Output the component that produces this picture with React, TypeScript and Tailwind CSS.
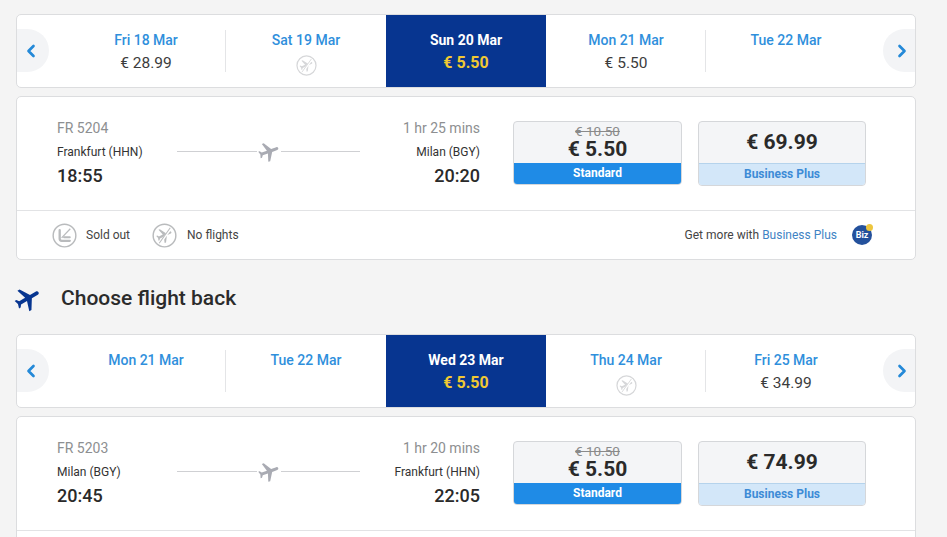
import { ChevronLeft, ChevronRight } from 'lucide-react';

const planePath =
  'M21 16v-2l-8-5V3.5c0-.83-.67-1.5-1.5-1.5S10 2.67 10 3.5V9l-8 5v2l8-2.5V19l-2 1.5V22l3.5-1 3.5 1v-1.5L13 19v-5.5l8 2.5z';

function PlaneIcon({ className, rotate }: { className: string; rotate: number }) {
  return (
    <svg viewBox="0 0 24 24" className={className} fill="currentColor">
      <path d={planePath} transform={`rotate(${rotate} 12 12)`} />
    </svg>
  );
}

function NoFlightIcon({ className, color }: { className: string; color: string }) {
  return (
    <svg viewBox="0 0 26 26" className={className} fill="none">
      <circle cx="13" cy="13" r="11.8" stroke={color} strokeWidth="1.5" />
      <g transform="translate(3.4 3.4) scale(0.8)">
        <path d={planePath} fill={color} transform="rotate(65 12 12)" />
      </g>
      <path d="M20 5 8.5 21" stroke="#ffffff" strokeWidth="2.4" />
      <path d="M19 5 7.5 21" stroke={color} strokeWidth="1.1" />
    </svg>
  );
}

function SoldOutIcon({ className }: { className: string }) {
  return (
    <svg viewBox="0 0 26 26" className={className} fill="none">
      <circle cx="13" cy="13" r="11.8" stroke="#b9bbbd" strokeWidth="1.5" />
      <path d="M8 7.5v9c0 1.2.8 2 2 2h8.5" stroke="#b9bbbd" strokeWidth="2.4" strokeLinecap="round" />
      <path d="M12.5 14.8h6" stroke="#b9bbbd" strokeWidth="2" strokeLinecap="round" />
      <path d="M19 6 10 15.5" stroke="#b9bbbd" strokeWidth="1.3" />
    </svg>
  );
}

type Day = { label: string; price?: string; noFlight?: boolean; active?: boolean };

function DayCell({ day, divider }: { day: Day; divider: boolean }) {
  if (day.active) {
    return (
      <div className="w-[160px] bg-[#073590] flex flex-col items-center pt-[15px] shrink-0">
        <div className="text-[14px] leading-[20px] font-bold text-white">{day.label}</div>
        <div className="text-[16px] leading-[20px] mt-[3px] font-bold text-[#f1c933]">{day.price}</div>
      </div>
    );
  }
  return (
    <div className="w-[160px] relative flex flex-col items-center pt-[15px] shrink-0">
      <div className="text-[14px] leading-[20px] font-medium text-[#2f8fdc]">{day.label}</div>
      {day.price && <div className="text-[15.5px] leading-[20px] mt-[3px] text-[#3c3c3c]">{day.price}</div>}
      {day.noFlight && <NoFlightIcon className="w-[21px] h-[21px] mt-[5px]" color="#d6d7d9" />}
      {divider && <div className="absolute right-0 top-[15px] h-[42px] w-px bg-[#e4e5e7]" />}
    </div>
  );
}

function DateStrip({ days }: { days: Day[] }) {
  return (
    <div className="h-[74px] bg-white border border-[#dcdddf] rounded-[5px] flex overflow-hidden">
      <div className="w-[32px] h-[43px] mt-[14px] rounded-r-full bg-[#f3f4f6] flex items-center justify-start pl-[4px] text-[#2489d8] shrink-0">
        <ChevronLeft size={20} strokeWidth={3.2} />
      </div>
      <div className="flex ml-[17px]">
        {days.map((d, i) => (
          <DayCell key={d.label} day={d} divider={i === 0 || i === 3} />
        ))}
      </div>
      <div className="w-[32px] h-[43px] mt-[14px] ml-auto rounded-l-full bg-[#f3f4f6] flex items-center justify-end pr-[3px] text-[#2489d8] shrink-0">
        <ChevronRight size={20} strokeWidth={3.2} />
      </div>
    </div>
  );
}

type Flight = {
  number: string;
  duration: string;
  from: string;
  to: string;
  depart: string;
  arrive: string;
  business: string;
};

function FlightRow({ flight }: { flight: Flight }) {
  return (
    <div className="flex h-[113px] pl-[40px] pt-[24px]">
      <div className="w-[120px] shrink-0 -mt-[1px]">
        <div className="text-[14px] leading-[16px] text-[#8d8f91]">{flight.number}</div>
        <div className="text-[12px] leading-[16px] mt-[8px] text-[#333333]">{flight.from}</div>
        <div className="text-[18px] leading-[22px] mt-[5px] font-medium text-[#2a2a2a]">{flight.depart}</div>
      </div>
      <div className="w-[183px] h-[16px] mt-[22px] shrink-0 relative flex items-center">
        <div className="w-full h-px bg-[#cfd0d3]" />
        <div className="absolute left-[80px] -top-[3px] bg-white">
          <PlaneIcon className="w-[24px] h-[24px] text-[#a9abb3]" rotate={70} />
        </div>
      </div>
      <div className="w-[120px] shrink-0 text-right -mt-[1px]">
        <div className="text-[14px] leading-[16px] text-[#8d8f91]">{flight.duration}</div>
        <div className="text-[12px] leading-[16px] mt-[8px] text-[#333333]">{flight.to}</div>
        <div className="text-[18px] leading-[22px] mt-[5px] font-medium text-[#2a2a2a]">{flight.arrive}</div>
      </div>
      <div className="w-[169px] h-[64px] ml-[33px] shrink-0 rounded-[4px] border border-[#d5d7da] bg-[#f4f5f7] overflow-hidden flex flex-col items-center">
        <div className="text-[13.5px] leading-[14px] mt-[2px] text-[#8a8a8a] line-through">€ 10.50</div>
        <div className="text-[21px] leading-[22px] font-bold text-[#2a2a2a]">€ 5.50</div>
        <div className="mt-auto w-full h-[21px] bg-[#1f8be6] text-center text-[12px] leading-[20px] font-bold text-white">Standard</div>
      </div>
      <div className="w-[168px] h-[65px] ml-[16px] shrink-0 rounded-[4px] border border-[#d5d7da] bg-[#f4f5f7] overflow-hidden flex flex-col items-center">
        <div className="flex-1 text-[21px] leading-[41px] font-bold text-[#2a2a2a]">{flight.business}</div>
        <div className="w-full h-[23px] bg-[#d3e7f9] border-t border-[#b5d3ec] text-center text-[12px] leading-[20px] font-bold text-[#3d8bd6]">Business Plus</div>
      </div>
    </div>
  );
}

export default function App() {
  return (
    <div className="h-[537px] overflow-hidden bg-[#f4f4f4] px-[16px] pt-[14px] w-[947px] font-['Roboto',sans-serif]">
      <div className="w-[900px]">
        <DateStrip
          days={[
            { label: 'Fri 18 Mar', price: '€ 28.99' },
            { label: 'Sat 19 Mar', noFlight: true },
            { label: 'Sun 20 Mar', price: '€ 5.50', active: true },
            { label: 'Mon 21 Mar', price: '€ 5.50' },
            { label: 'Tue 22 Mar' },
          ]}
        />
        <div className="mt-[8px] bg-white border border-[#dcdddf] rounded-[5px]">
          <FlightRow
            flight={{
              number: 'FR 5204',
              duration: '1 hr 25 mins',
              from: 'Frankfurt (HHN)',
              to: 'Milan (BGY)',
              depart: '18:55',
              arrive: '20:20',
              business: '€ 69.99',
            }}
          />
          <div className="h-[49px] border-t border-[#e2e3e5] flex items-center pl-[35px] pr-[43px] text-[12px] text-[#444444]">
            <SoldOutIcon className="w-[25px] h-[25px]" />
            <span className="ml-[9px]">Sold out</span>
            <NoFlightIcon className="w-[25px] h-[25px] ml-[22px]" color="#b9bbbd" />
            <span className="ml-[10px]">No flights</span>
            <span className="ml-auto">
              Get more with <span className="text-[#3f83c4]">Business Plus</span>
            </span>
            <div className="relative w-[20px] h-[20px] ml-[15px] rounded-full bg-[#24519c] text-white text-[9px] font-bold leading-[20px] text-center">
              Biz
              <div className="absolute -right-[1px] -top-[1px] w-[7px] h-[7px] rounded-full bg-[#edc63f]" />
            </div>
          </div>
        </div>
        <div className="h-[74px] pt-[4px] flex items-center">
          <PlaneIcon className="w-[30px] h-[30px] text-[#073590] -ml-[3px]" rotate={60} />
          <h2 className="ml-[18px] text-[21px] font-medium text-[#2b2b2b]">Choose flight back</h2>
        </div>
        <DateStrip
          days={[
            { label: 'Mon 21 Mar' },
            { label: 'Tue 22 Mar' },
            { label: 'Wed 23 Mar', price: '€ 5.50', active: true },
            { label: 'Thu 24 Mar', noFlight: true },
            { label: 'Fri 25 Mar', price: '€ 34.99' },
          ]}
        />
        <div className="mt-[8px] bg-white border border-[#dcdddf] rounded-[5px] h-[200px]">
          <FlightRow
            flight={{
              number: 'FR 5203',
              duration: '1 hr 20 mins',
              from: 'Milan (BGY)',
              to: 'Frankfurt (HHN)',
              depart: '20:45',
              arrive: '22:05',
              business: '€ 74.99',
            }}
          />
          <div className="border-t border-[#e2e3e5]" />
        </div>
      </div>
    </div>
  );
}
